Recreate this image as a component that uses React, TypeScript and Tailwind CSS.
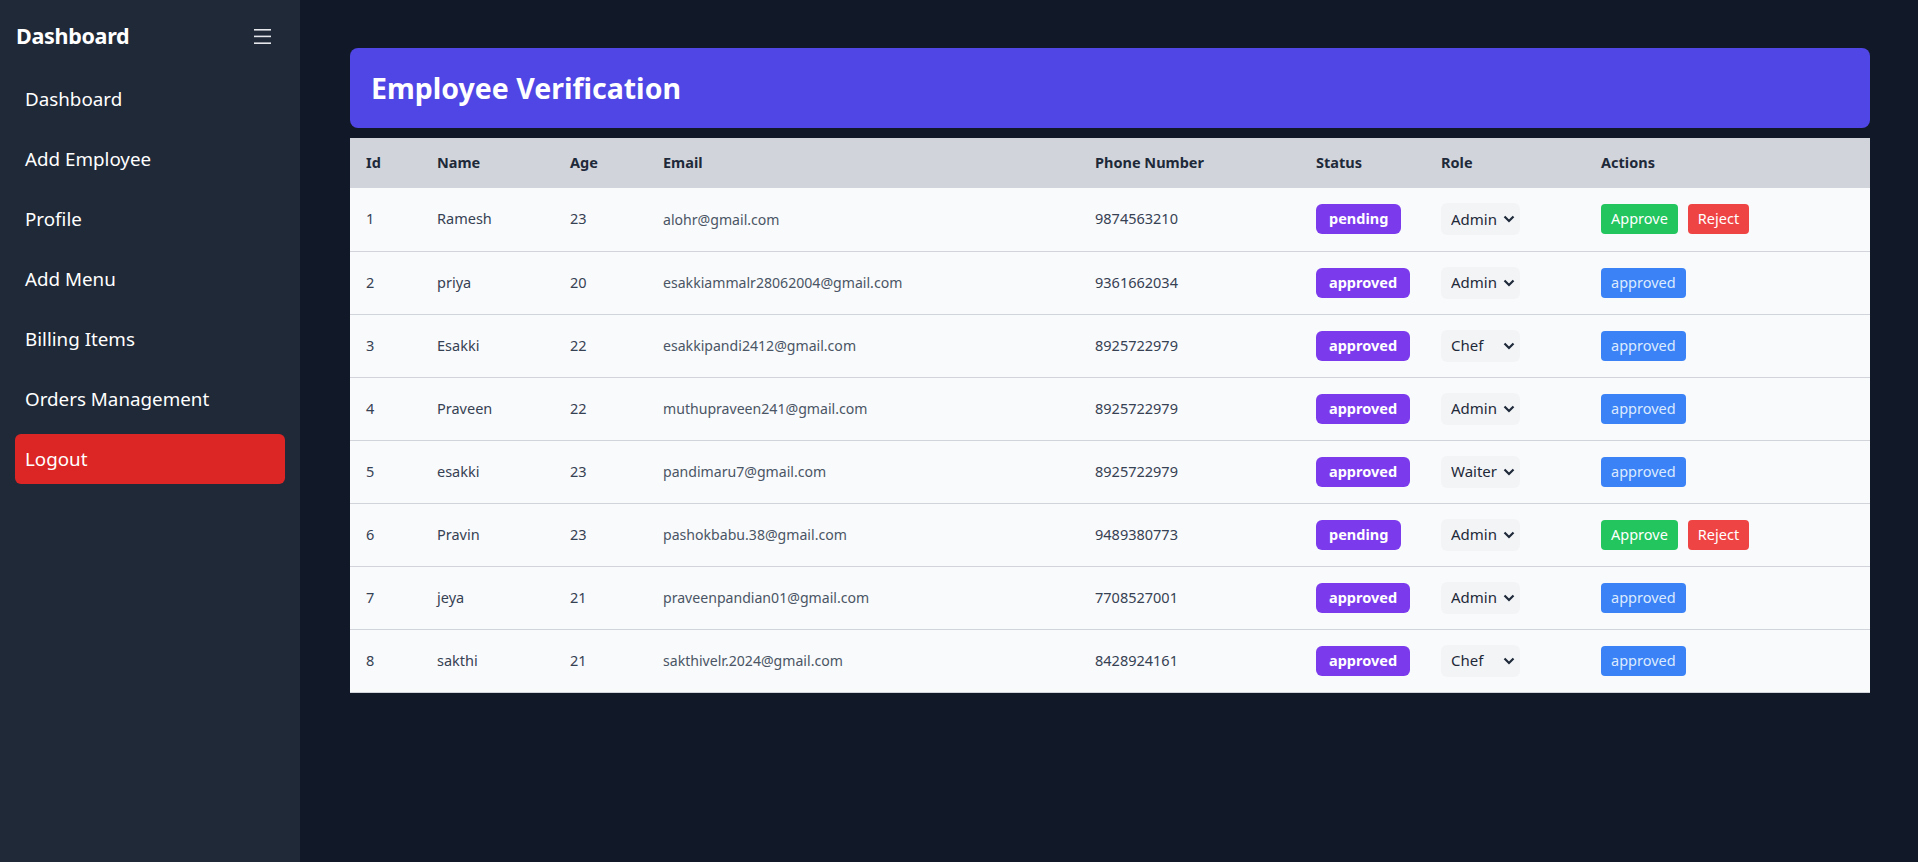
import React from "react";

interface Employee {
  id: number;
  name: string;
  age: number;
  email: string;
  phone: string;
  status: "pending" | "approved";
  role: string;
}

const employees: Employee[] = [
  { id: 1, name: "Ramesh", age: 23, email: "alohr@gmail.com", phone: "9874563210", status: "pending", role: "Admin" },
  { id: 2, name: "priya", age: 20, email: "esakkiammalr28062004@gmail.com", phone: "9361662034", status: "approved", role: "Admin" },
  { id: 3, name: "Esakki", age: 22, email: "esakkipandi2412@gmail.com", phone: "8925722979", status: "approved", role: "Chef" },
  { id: 4, name: "Praveen", age: 22, email: "muthupraveen241@gmail.com", phone: "8925722979", status: "approved", role: "Admin" },
  { id: 5, name: "esakki", age: 23, email: "pandimaru7@gmail.com", phone: "8925722979", status: "approved", role: "Waiter" },
  { id: 6, name: "Pravin", age: 23, email: "pashokbabu.38@gmail.com", phone: "9489380773", status: "pending", role: "Admin" },
  { id: 7, name: "jeya", age: 21, email: "praveenpandian01@gmail.com", phone: "7708527001", status: "approved", role: "Admin" },
  { id: 8, name: "sakthi", age: 21, email: "sakthivelr.2024@gmail.com", phone: "8428924161", status: "approved", role: "Chef" },
];

const navItems = ["Dashboard", "Add Employee", "Profile", "Add Menu", "Billing Items", "Orders Management"];

const Sidebar: React.FC = () => (
  <aside className="w-[300px] shrink-0 bg-[#1f2937] px-[15px] pt-[21px]">
    <div className="flex items-center justify-between h-[30px] pl-px pr-[14px]">
      <h1 className="text-[21.5px] leading-[30px] font-bold text-white tracking-[-0.3px]">Dashboard</h1>
      <svg width="17" height="17" viewBox="0 0 17 17" className="text-gray-200">
        <rect x="0" y="1" width="17" height="1.6" fill="currentColor" />
        <rect x="0" y="7.6" width="17" height="1.6" fill="currentColor" />
        <rect x="0" y="14.4" width="17" height="1.6" fill="currentColor" />
      </svg>
    </div>
    <nav className="mt-[23px] flex flex-col gap-[10px]">
      {navItems.map((item) => (
        <a key={item} className="h-[50px] flex items-center px-[10px] rounded-md text-[18.8px] text-white cursor-pointer hover:bg-gray-700">
          {item}
        </a>
      ))}
      <a className="h-[50px] flex items-center px-[10px] rounded-md text-[18.8px] text-white bg-[#dc2626] cursor-pointer">
        Logout
      </a>
    </nav>
  </aside>
);

const RoleSelect: React.FC<{ value: string }> = ({ value }) => (
  <div className="relative w-[79px] h-[32px]">
    <select
      defaultValue={value}
      className="appearance-none w-full h-full bg-[#f3f4f6] rounded-md pl-[10px] text-[15px] text-gray-800 outline-none"
    >
      <option>Admin</option>
      <option>Chef</option>
      <option>Waiter</option>
    </select>
    <svg
      width="12"
      height="8"
      viewBox="0 0 12 8"
      className="absolute right-[5px] top-[12px] pointer-events-none text-gray-800"
    >
      <path d="M1.5 1.5 L6 6 L10.5 1.5" fill="none" stroke="currentColor" strokeWidth="2.2" />
    </svg>
  </div>
);

const App: React.FC = () => {
  const headers = ["Id", "Name", "Age", "Email", "Phone Number", "Status", "Role", "Actions"];
  const widths = ["w-[71px]", "w-[133px]", "w-[93px]", "w-[432px]", "w-[221px]", "w-[125px]", "w-[160px]", "w-[285px]"];

  return (
    <div className="flex min-h-screen font-['Noto_Sans',sans-serif]">
      <Sidebar />
      <main className="flex-1 bg-[#111827] pl-[50px] pr-[48px] pt-[48px]">
        <div className="h-[80px] rounded-lg bg-[#4f46e5] flex items-center px-[21px]">
          <h2 className="text-[28.5px] font-bold text-white">Employee Verification</h2>
        </div>
        <table className="mt-[10px] w-full table-fixed border-collapse bg-[#f9fafb]">
          <colgroup>
            {widths.map((w, i) => (
              <col key={i} className={w} />
            ))}
          </colgroup>
          <thead className="bg-[#d1d5db]">
            <tr className="h-[50px]">
              {headers.map((h) => (
                <th key={h} className="text-left px-4 text-[14.5px] font-bold text-gray-800">
                  {h}
                </th>
              ))}
            </tr>
          </thead>
          <tbody>
            {employees.map((e) => (
              <tr key={e.id} className="h-[63px] border-b border-[#d1d5db] text-[14.5px] text-gray-700">
                <td className="px-4">{e.id}</td>
                <td className="px-4">{e.name}</td>
                <td className="px-4">{e.age}</td>
                <td className="px-4 text-gray-600 text-[14.1px]">{e.email}</td>
                <td className="px-4">{e.phone}</td>
                <td className="px-4">
                  <span className="inline-flex items-center h-[30px] px-[13px] rounded-md bg-[#7c3aed] text-white text-[14.5px] font-bold">
                    {e.status}
                  </span>
                </td>
                <td className="px-4">
                  <RoleSelect value={e.role} />
                </td>
                <td className="px-4">
                  {e.status === "pending" ? (
                    <div className="flex gap-[10px]">
                      <button className="h-[30px] px-[10px] rounded bg-[#22c55e] text-white text-[14.5px]">Approve</button>
                      <button className="h-[30px] px-[10px] rounded bg-[#ef4444] text-white text-[14.5px]">Reject</button>
                    </div>
                  ) : (
                    <button className="h-[30px] px-[10px] rounded bg-[#3b82f6] text-blue-100 text-[14.5px]">approved</button>
                  )}
                </td>
              </tr>
            ))}
          </tbody>
        </table>
      </main>
    </div>
  );
};

export default App;
